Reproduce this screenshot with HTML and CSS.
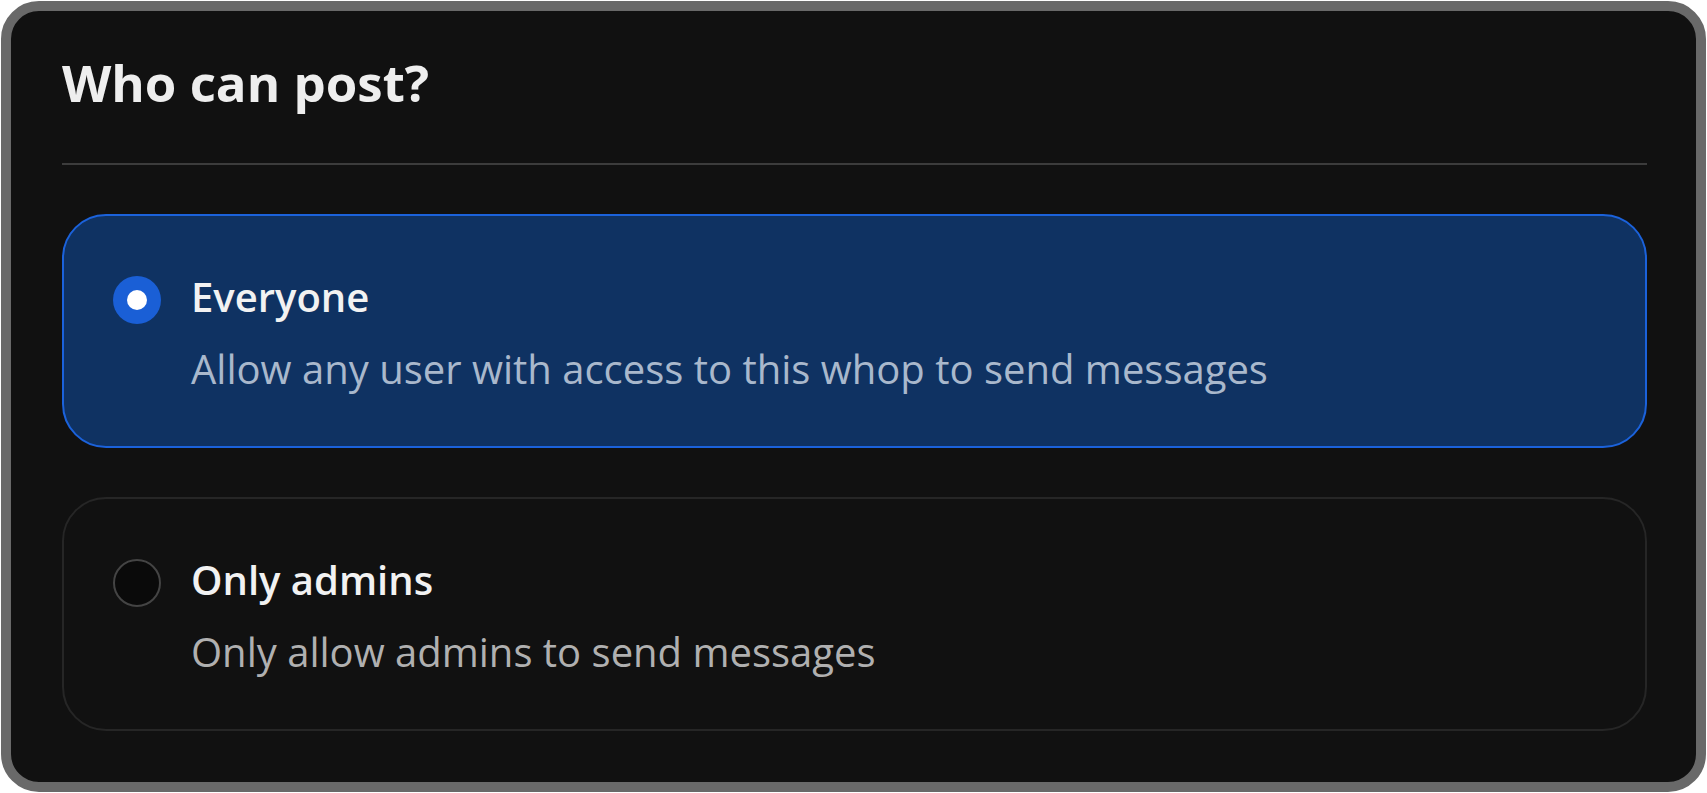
FILE: index.html
```html
<!DOCTYPE html>
<html lang="en">
<head>
<meta charset="utf-8">
<title>Who can post?</title>
<link rel="stylesheet" href="styles.css">
</head>
<body>
<div class="panel">
  <h1 class="title">Who can post?</h1>
  <div class="divider"></div>
  <div class="options">
    <div class="option selected">
      <span class="radio"><span class="dot"></span></span>
      <div class="text">
        <div class="label">Everyone</div>
        <div class="desc">Allow any user with access to this whop to send messages</div>
      </div>
    </div>
    <div class="option">
      <span class="radio"></span>
      <div class="text">
        <div class="label">Only admins</div>
        <div class="desc">Only allow admins to send messages</div>
      </div>
    </div>
  </div>
</div>
</body>
</html>
```

FILE: styles.css
```css
html, body {
  margin: 0;
  padding: 0;
  background: #ffffff;
}
body {
  font-family: "Open Sans", "Noto Sans", sans-serif;
  padding: 1px;
}
.panel {
  box-sizing: border-box;
  width: 1705px;
  height: 791px;
  border: 10px solid #696969;
  border-radius: 38px;
  background: #111111;
  padding: 40px 49px 0 51px;
}
.title {
  margin: 0;
  font-size: 51px;
  line-height: 62px;
  font-weight: 700;
  color: #eeeeee;
}
.divider {
  height: 2px;
  background: #3c3c3c;
  margin-top: 50px;
}
.options {
  display: flex;
  flex-direction: column;
  gap: 49px;
  margin-top: 49px;
}
.option {
  display: flex;
  align-items: flex-start;
  gap: 30px;
  border: 2px solid #262626;
  border-radius: 44px;
  padding: 55px 49px 51px;
}
.option.selected {
  background: #0f3262;
  border-color: #1b62db;
}
.radio {
  box-sizing: border-box;
  flex: none;
  width: 48px;
  height: 48px;
  margin-top: 5px;
  border-radius: 50%;
  border: 2px solid #444444;
  background: #0a0a0a;
  display: flex;
  align-items: center;
  justify-content: center;
}
.option.selected .radio {
  border: none;
  background: #1a5fd6;
}
.dot {
  width: 20px;
  height: 20px;
  border-radius: 50%;
  background: #ffffff;
}
.text {
  display: flex;
  flex-direction: column;
  gap: 20px;
}
.label {
  font-size: 40px;
  line-height: 52px;
  font-weight: 600;
  color: #f2f2f2;
}
.desc {
  font-size: 40px;
  line-height: 52px;
  font-weight: 400;
  color: #b0b0b0;
}
.option.selected .desc {
  color: #a9b8cc;
}
```
